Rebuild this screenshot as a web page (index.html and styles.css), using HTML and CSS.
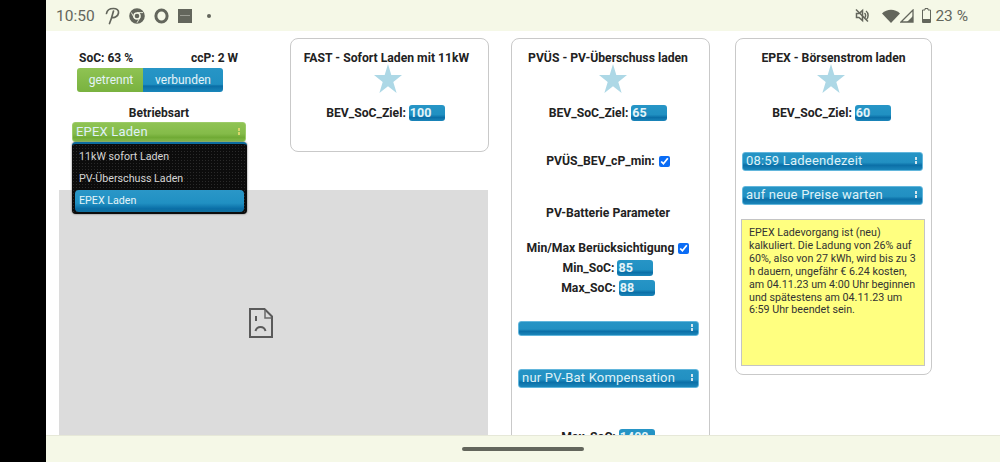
FILE: index.html
```html
<!DOCTYPE html>
<html lang="de">
<head>
    <meta charset="UTF-8">
    <meta name="viewport" content="width=device-width, initial-scale=1.0">
    <title>Wallbox</title>
    <link rel="stylesheet" href="styles.css">
</head>
<body>
    <div class="cutout"></div>
    <div class="screen">
        <div class="statusbar">
            <div class="status-left">
                <span class="clock">10:50</span>
                <svg class="ico ico-p" width="16" height="18" viewBox="0 0 16 18"><path d="M1.500 6.500C2 3 5 1.500 8.500 1.500c3 0 5.500 1.500 5 4.500-.5 3-3.500 5-6.500 4.500M8.500 4C7.500 8 6.500 12 4.500 16.500" fill="none" stroke="#63665c" stroke-width="1.700" stroke-linecap="round"/></svg>
                <svg class="ico" width="16" height="16" viewBox="0 0 16 16"><circle cx="8" cy="8" r="5.800" fill="none" stroke="#63665c" stroke-width="4"/><circle cx="8" cy="8" r="2.300" fill="#63665c"/><path d="M8 4.600h6M5.100 9.700 2.300 4.500M10.900 9.700 8 14.800" stroke="#f5f8e7" stroke-width=".9"/></svg>
                <svg class="ico" width="15" height="16" viewBox="0 0 15 16"><ellipse cx="7.500" cy="8" rx="5.600" ry="6" fill="none" stroke="#63665c" stroke-width="3"/></svg>
                <span class="app-square"></span>
                <span class="status-dot"></span>
            </div>
            <div class="status-right">
                <svg width="16" height="15" viewBox="0 0 15 15"><path d="M2 5.500h2.500L8 2.500v10l-3.500-3H2zM10 5c1.500 1.200 1.500 3.800 0 5M11.500 3c2.800 2 2.800 7 0 9" fill="none" stroke="#63665c" stroke-width="1.500"/><path d="M1.500 1.500 13.500 13.500" stroke="#63665c" stroke-width="1.500"/></svg>
                <svg class="wifi" width="18" height="14" viewBox="0 0 18 14"><path d="M0 4.500C5-.5 13-.5 18 4.500L9 14z" fill="#63665c"/></svg>
                <svg width="14" height="14" viewBox="0 0 14 14"><path d="M13 1v12H1z" fill="none" stroke="#63665c" stroke-width="1.300"/><path d="M13 7v6H7z" fill="#63665c"/></svg>
                <svg class="battery" width="9" height="15" viewBox="0 0 9 15"><path d="M3 .5h3v1.500h2.500v12.500h-8V2H3z" fill="none" stroke="#63665c" stroke-width="1"/><rect x="1" y="11" width="7" height="3" fill="#63665c"/></svg>
                <span class="percent">23 %</span>
            </div>
        </div>

        <div class="content">
            <div class="left">
                <div class="left-top">
                    <div class="controls">
                        <div class="soc-row">
                            <span>SoC: 63 %</span>
                            <span>ccP: 2 W</span>
                        </div>
                        <div class="toggle">
                            <span class="toggle-off">getrennt</span>
                            <span class="toggle-on">verbunden</span>
                        </div>
                        <div class="mode-label">Betriebsart</div>
                        <div class="select select-green">
                            <span>EPEX Laden</span>
                            <span class="arrows"></span>
                            <div class="dropdown">
                                <div class="option">11kW sofort Laden</div>
                                <div class="option">PV-Überschuss Laden</div>
                                <div class="option option-active">EPEX Laden</div>
                            </div>
                        </div>
                    </div>
                    <div class="card card-fast">
                        <h4>FAST - Sofort Laden mit 11kW</h4>
                        <svg class="star" width="28" height="29" viewBox="0 0 28 28" preserveAspectRatio="none"><path d="M14 0l3.300 10.700H28l-8.700 6.600L22.600 28 14 21.400 5.400 28l3.300-10.700L0 10.700h10.700z"/></svg>
                        <div class="field"><label>BEV_SoC_Ziel:</label><span class="num">100</span></div>
                    </div>
                </div>
                <div class="frame">
                    <svg width="24" height="30" viewBox="0 0 24 30"><path d="M1 1h14.500L23 8.500V29H1z" fill="none" stroke="#5a5a5a" stroke-width="2"/><path d="M16 2v8h6.500" fill="none" stroke="#6a6a6a" stroke-width="1.500"/><path d="M7 8v5M6.500 23c.8-3 2.500-4 5-4s4.200 1 5 4" fill="none" stroke="#5a5a5a" stroke-width="2"/></svg>
                </div>
            </div>

            <div class="card card-pv">
                <h4>PVÜS - PV-Überschuss laden</h4>
                <svg class="star" width="28" height="29" viewBox="0 0 28 28" preserveAspectRatio="none"><path d="M14 0l3.300 10.700H28l-8.700 6.600L22.600 28 14 21.400 5.400 28l3.300-10.700L0 10.700h10.700z"/></svg>
                <div class="field"><label>BEV_SoC_Ziel:</label><span class="num">65</span></div>
                <div class="field check-min"><label>PVÜS_BEV_cP_min:</label><input type="checkbox" checked></div>
                <div class="bat-title">PV-Batterie Parameter</div>
                <div class="field check-minmax"><label>Min/Max Berücksichtigung</label><input type="checkbox" checked></div>
                <div class="field soc-field"><label>Min_SoC:</label><span class="num">85</span></div>
                <div class="field soc-field"><label>Max_SoC:</label><span class="num">88</span></div>
                <div class="select select-thin"><span></span><span class="arrows"></span></div>
                <div class="select select-comp"><span>nur PV-Bat Kompensation</span><span class="arrows"></span></div>
                <div class="field last-field"><label>Max_SoC:</label><span class="num">1400</span></div>
            </div>

            <div class="card card-epex">
                <h4>EPEX - Börsenstrom laden</h4>
                <svg class="star" width="28" height="29" viewBox="0 0 28 28" preserveAspectRatio="none"><path d="M14 0l3.300 10.700H28l-8.700 6.600L22.600 28 14 21.400 5.400 28l3.300-10.700L0 10.700h10.700z"/></svg>
                <div class="field"><label>BEV_SoC_Ziel:</label><span class="num">60</span></div>
                <div class="select select-time"><span>08:59 Ladeendezeit</span><span class="arrows"></span></div>
                <div class="select select-price"><span>auf neue Preise warten</span><span class="arrows"></span></div>
                <div class="note">EPEX Ladevorgang ist (neu) kalkuliert. Die Ladung von 26% auf 60%, also von 27 kWh, wird bis zu 3 h dauern, ungefähr € 6.24 kosten, am 04.11.23 um 4:00 Uhr beginnen und spätestens am 04.11.23 um 6:59 Uhr beendet sein.</div>
            </div>
        </div>

        <div class="navbar"><div class="nav-pill"></div></div>
    </div>
</body>
</html>
```

FILE: styles.css
```css
* {
    box-sizing: border-box;
}
html, body {
    height: 100%;
}
body {
    margin: 0;
    display: flex;
    overflow: hidden;
    background: #fff;
    color: #222;
    font-family: Roboto, "Liberation Sans", sans-serif;
}
.cutout {
    width: 46px;
    flex: none;
    background: #000;
}
.screen {
    flex: 1;
    display: flex;
    flex-direction: column;
    min-width: 0;
}

/* android status bar */
.statusbar {
    height: 31px;
    flex: none;
    display: flex;
    justify-content: space-between;
    align-items: center;
    padding: 0 32px 0 10px;
    background: #f5f8e7;
    color: #63665c;
}
.status-left, .status-right {
    display: flex;
    align-items: center;
}
.clock {
    font-size: 15.500px;
    margin-right: 10px;
}
.ico {
    margin-right: 9px;
}
.ico-p {
    margin-right: 8px;
}
.app-square {
    position: relative;
    width: 14px;
    height: 14px;
    background: #63665c;
    margin-right: 15px;
}
.app-square::after {
    content: "";
    position: absolute;
    left: 2px;
    right: 2px;
    top: 6px;
    height: 1px;
    background: #9b9d94;
}
.status-dot {
    width: 4px;
    height: 4px;
    border-radius: 50%;
    background: #63665c;
}
.wifi {
    margin-left: 12px;
}
.battery {
    margin-left: 8px;
}
.percent {
    font-size: 15.500px;
    margin-left: 4px;
}

/* page */
.content {
    flex: 1;
    min-height: 0;
    display: flex;
    align-items: flex-start;
    overflow: hidden;
    padding: 7px 0 0 13px;
}
.left {
    width: 430px;
    flex: none;
}
.left-top {
    display: flex;
    align-items: flex-start;
}
.controls {
    width: 231px;
    flex: none;
    padding: 13px 0 0 13px;
    font-size: 12px;
    font-weight: 700;
}
.soc-row {
    display: flex;
    justify-content: space-between;
    width: 166px;
    padding: 0 0 0 7px;
    line-height: 15px;
}
.toggle {
    display: flex;
    width: 146px;
    height: 24px;
    margin: 2px 0 0 5px;
    border-radius: 3px;
    overflow: hidden;
    font-size: 12px;
    font-weight: 400;
    color: #e4f3f8;
    line-height: 24px;
    text-align: center;
}
.toggle-off {
    width: 66px;
    padding-left: 2px;
    background: linear-gradient(#8fc353, #79b23f);
}
.toggle-on {
    flex: 1;
    background: linear-gradient(#2795c6 0%, #2090c2 68%, #0a6ea6 75%, #1a87bb 100%);
}
.mode-label {
    width: 174px;
    text-align: center;
    line-height: 14px;
    margin-top: 14px;
}

/* jquery-mobile like selects */
.select {
    position: relative;
    display: flex;
    justify-content: space-between;
    align-items: center;
    padding: 0 3px 2px;
    border-radius: 3px;
    border: 1px solid #62b6dc;
    background: linear-gradient(#2694c5 0%, #2290c2 55%, #0b6fa7 72%, #1b86ba 100%);
    color: #dff1f7;
    font-size: 13px;
    font-weight: 400;
    letter-spacing: .2px;
    white-space: nowrap;
}
.arrows {
    width: 4px;
    height: 7px;
    margin-right: 1px;
    background:
        linear-gradient(#d5e6ee, #d5e6ee) center top / 2px 3px no-repeat,
        linear-gradient(#d5e6ee, #d5e6ee) center bottom / 2px 3px no-repeat;
}
.select-green {
    width: 174px;
    height: 20px;
    margin-top: 2px;
    border-color: #9ccb68;
    background: linear-gradient(#8fc353 0%, #84bb49 60%, #70aa35 80%, #82b948 100%);
}
.select-green .arrows {
    background:
        linear-gradient(#d9d76a, #d9d76a) center top / 2px 3px no-repeat,
        linear-gradient(#d9d76a, #d9d76a) center bottom / 2px 3px no-repeat;
}

/* open menu lies over the grey frame */
.dropdown {
    position: absolute;
    z-index: 2;
    left: -1px;
    top: 19px;
    width: 175px;
    height: 72px;
    padding: 2px 3px 2px;
    border-radius: 4px;
    border-top: 2px solid #0d6c9f;
    background-color: #0c0c0c;
    background-image: radial-gradient(#2a2a2a 1px, transparent 1px);
    background-size: 3px 3px;
    box-shadow: 0 0 2px #555;
    font-size: 10.700px;
    letter-spacing: 0;
    color: #d6d6d6;
}
.option {
    height: 22px;
    line-height: 21px;
    padding-left: 4px;
}
.option-active {
    border-radius: 4px;
    color: #e4f3f8;
    background: linear-gradient(#2a97c8 0%, #2090c2 60%, #0a6ea6 85%, #13719f 100%);
}

/* cards */
.card {
    flex: none;
    padding-top: 12px;
    border: 1px solid #c9c9c9;
    border-radius: 8px;
    text-align: center;
    font-size: 12.200px;
    font-weight: 700;
}
.card h4 {
    margin: 0;
    font-size: 12.200px;
    line-height: 14px;
}
.star {
    display: block;
    margin-top: -1px;
    fill: #add8e6;
}
.card-fast {
    width: 199px;
    height: 114px;
}
.card-fast h4 {
    padding-right: 6px;
}
.card-fast .field {
    padding-right: 8px;
}
.card-fast .star {
    margin-left: 83px;
}
.card-pv {
    width: 199px;
    height: 430px;
    margin-left: 22px;
    padding-right: 5px;
}
.card-pv .star {
    margin-left: 87px;
}
.card-epex {
    width: 197px;
    height: 337px;
    margin-left: 25px;
}
.card-epex .star {
    margin-left: 81px;
}
.card-epex .field {
    padding-right: 4px;
}
.field {
    display: flex;
    justify-content: center;
    align-items: center;
    gap: 3px;
    height: 16px;
    margin-top: 12px;
}
.num {
    width: 36px;
    height: 16px;
    padding-left: 1px;
    border-radius: 3px;
    background: linear-gradient(#2795c6 0%, #2090c2 60%, #0b6fa7 78%, #1b86ba 100%);
    color: #e4f3f8;
    font-size: 12.500px;
    line-height: 16px;
    text-align: left;
    overflow: hidden;
}
.field input {
    width: 11px;
    height: 11px;
    margin: 0 0 0 1px;
    accent-color: #0a6cf5;
}
.check-min {
    margin-top: 32px;
}
.bat-title {
    margin-top: 37px;
    line-height: 14px;
}
.check-minmax {
    margin-top: 20px;
}
.soc-field {
    margin-top: 4px;
}
.select-thin {
    width: 181px;
    height: 15px;
    margin: 25px 0 0 6px;
}
.select-comp {
    width: 181px;
    height: 19px;
    margin: 33px 0 0 6px;
}
.last-field {
    margin-top: 41px;
}
.select-time, .select-price {
    width: 181px;
    height: 19px;
    margin-left: 6px;
}
.select-time {
    margin-top: 31px;
}
.select-price {
    margin-top: 15px;
}
.note {
    width: 184px;
    height: 147px;
    margin: 14px 0 0 5px;
    padding: 7px 5px 7px 7px;
    border: 1px solid #c4c4c4;
    background: #ffff80;
    font-size: 10.700px;
    font-weight: 400;
    line-height: 12.900px;
    text-align: left;
    color: #333;
}

/* grey frame of the failed embed */
.frame {
    display: flex;
    align-items: center;
    justify-content: center;
    width: 429px;
    height: 266px;
    margin-top: 38px;
    padding-right: 25px;
    background: #dcdcdc;
}

/* android nav bar */
.navbar {
    height: 27px;
    flex: none;
    position: relative;
    z-index: 3;
    display: flex;
    justify-content: center;
    align-items: center;
    background: #f5f8e7;
    border-top: 1px solid #e6e8d8;
}
.nav-pill {
    width: 122px;
    height: 4px;
    margin-bottom: 1px;
    border-radius: 2px;
    background: #63665c;
}
```
